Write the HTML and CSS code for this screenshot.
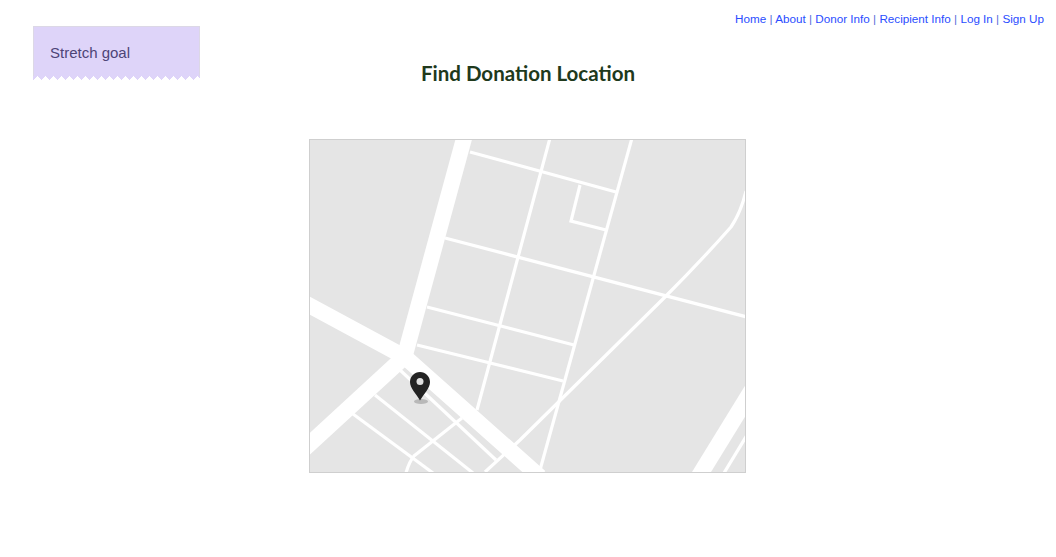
FILE: index.html
```html
<!DOCTYPE html>
<html lang="en">
<head>
<meta charset="utf-8">
<title>Find Donation Location</title>
<link rel="stylesheet" href="styles.css">
</head>
<body>
<aside class="note">Stretch goal</aside>
<nav class="nav">
  <a href="#">Home</a> | <a href="#">About</a> | <a href="#">Donor Info</a> | <a href="#">Recipient Info</a> | <a href="#">Log In</a> | <a href="#">Sign Up</a>
</nav>
<main class="main">
  <h1 class="title">Find Donation Location</h1>
  <div class="map">
    <svg class="map-svg" viewBox="310 140 435 332" width="435" height="332" aria-label="Map">
      <rect class="land" x="310" y="140" width="435" height="332"/>
      <g class="road-wide">
        <path d="M466.300 130L405 355"/>
        <path d="M290 295L405 357L540 477"/>
        <path d="M290 462L402 359"/>
      </g>
      <polygon class="road-fill" points="746,384 692,472 711,472 746,415"/>
      <g class="road">
        <path d="M470 152L616 192"/>
        <path d="M550 138L477 410"/>
        <path d="M632 138L540 470"/>
        <path d="M580 185L571 221L606 230"/>
        <path d="M445 238L747 317"/>
        <path d="M746 191Q741 212 731 227Q700 262 665 297L520 440L485 472"/>
        <path d="M427 307L574 345"/>
        <path d="M417 345L563 381"/>
        <path d="M400 370L496 460"/>
        <path d="M375 395L473 473"/>
        <path d="M353 414L433 473"/>
        <path d="M462 418L414 456Q409 462 406 473"/>
        <path d="M747 435L724 473"/>
      </g>
      <ellipse class="pin-shadow" cx="421" cy="401.500" rx="7" ry="2.500"/>
      <path class="pin" d="M420 372C414.400 372 410 376.500 410 382C410 388 416 393.500 420 400.500C424 393.500 430 388 430 382C430 376.500 425.600 372 420 372Z"/>
      <circle class="pin-hole" cx="420" cy="381.500" r="3.500"/>
    </svg>
  </div>
</main>
</body>
</html>
```
FILE: styles.css
```css
* {
  box-sizing: border-box;
}

html,
body {
  margin: 0;
  background: #fff;
}

body {
  font-family: "Liberation Sans", Arial, sans-serif;
  height: 557px;
  overflow: hidden;
}

.nav {
  padding: 12px 12px 0 0;
  font-size: 11.7px;
  line-height: 14px;
  text-align: right;
  color: #5a6bd8;
}

.nav a {
  color: #2a4dff;
  text-decoration: none;
}

.note {
  position: absolute;
  left: 33px;
  top: 26px;
  width: 167px;
  height: 50px;
  padding: 17px 0 0 16px;
  font-size: 15px;
  line-height: 18px;
  color: #4d4477;
  background: #ded4f9;
  border: 1px solid #dcd8e6;
  border-bottom: 0;
}

.note::after {
  content: "";
  position: absolute;
  left: -1px;
  right: -1px;
  top: 49px;
  height: 4px;
  background:
    linear-gradient(135deg, #ded4f9 25%, transparent 25%) 0 0 / 8px 8px repeat-x,
    linear-gradient(225deg, #ded4f9 25%, transparent 25%) 0 0 / 8px 8px repeat-x;
}

.main {
  display: flex;
  flex-direction: column;
  align-items: center;
}

.title {
  margin: 33px 0 52px;
  font-family: Lato, "Noto Sans", sans-serif;
  font-size: 20.500px;
  line-height: 28px;
  font-weight: 700;
  color: #20391c;
}

.map {
  width: 437px;
  height: 334px;
  margin-right: 1px;
  border: 1px solid #cfcfcf;
}

.map-svg {
  display: block;
}

.land {
  fill: #e5e5e5;
}

.road-wide path {
  fill: none;
  stroke: #fff;
  stroke-width: 16;
}

.road-fill {
  fill: #fff;
}

.road path {
  fill: none;
  stroke: #fff;
  stroke-width: 3.200;
}

.pin {
  fill: #232323;
}

.pin-hole {
  fill: #e0e0e0;
}

.pin-shadow {
  fill: #b8b8b8;
}
```
